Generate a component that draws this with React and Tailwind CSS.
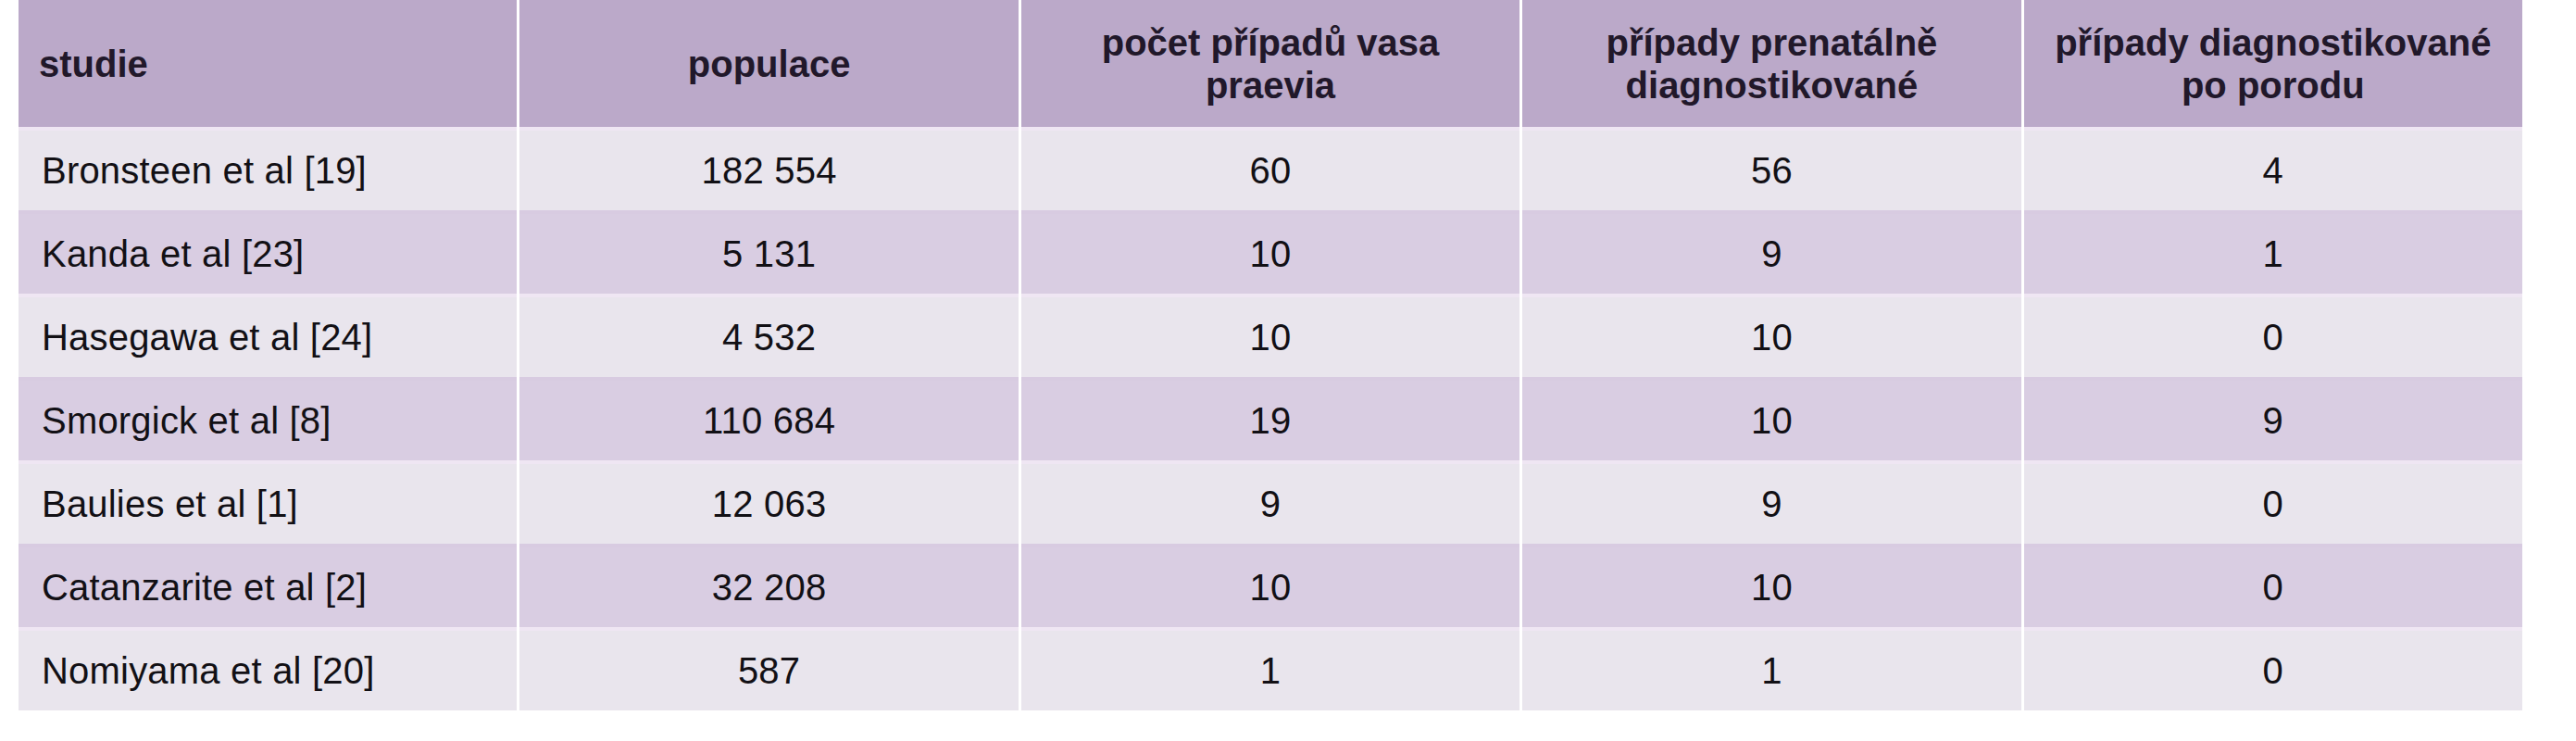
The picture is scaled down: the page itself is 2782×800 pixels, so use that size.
import React from "react";

const headers = [
  "studie",
  "populace",
  "počet případů vasa praevia",
  "případy prenatálně diagnostikované",
  "případy diagnostikované po porodu",
];

const rows = [
  ["Bronsteen et al [19]", "182 554", "60", "56", "4"],
  ["Kanda et al [23]", "5 131", "10", "9", "1"],
  ["Hasegawa et al [24]", "4 532", "10", "10", "0"],
  ["Smorgick et al [8]", "110 684", "19", "10", "9"],
  ["Baulies et al [1]", "12 063", "9", "9", "0"],
  ["Catanzarite et al [2]", "32 208", "10", "10", "0"],
  ["Nomiyama et al [20]", "587", "1", "1", "0"],
];

export default function App() {
  return (
    <div className="min-h-[800px] bg-white pl-[20px] font-['Liberation_Sans',Arial,sans-serif]">
      <div className="w-[2704px] grid grid-cols-5 gap-x-[3px]">
        {headers.map((h, i) => (
          <div
            key={h}
            className={
              "h-[137px] bg-[#bba9c9] flex items-center text-[40px] leading-[46px] font-bold text-[#21182a] " +
              (i === 0 ? "px-[22px]" : "justify-center text-center px-[12px]")
            }
          >
            {h}
          </div>
        ))}
        {rows.map((r, ri) =>
          r.map((c, ci) => (
            <div
              key={ri + "-" + ci}
              className={
                "h-[90px] flex items-center text-[40px] text-[#121015] tracking-[0.2px] " +
                (ri % 2 === 0
                  ? "bg-[#e9e5ed] border-t-[4px] border-[#efe6f3] "
                  : "bg-[#d9cde2] border-t-[4px] border-[#d8cbe1] ") +
                (ci === 0 ? "px-[25px]" : "justify-center")
              }
            >
              {c}
            </div>
          ))
        )}
      </div>
    </div>
  );
}
